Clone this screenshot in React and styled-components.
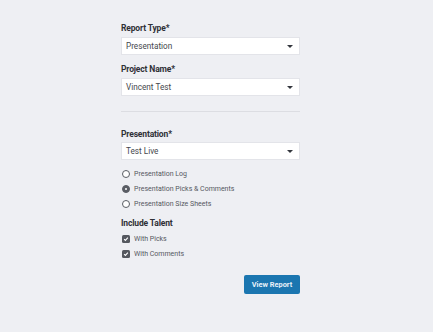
import styled, { createGlobalStyle } from 'styled-components';

const Global = createGlobalStyle`
  html, body {
    margin: 0;
    background: #eeeff3;
    font-family: Roboto, "Liberation Sans", sans-serif;
  }
`

const Page = styled.div`
  width: 433px;
  height: 332px;
  padding: 22px 0 0 121px;
  box-sizing: border-box;
`

const Form = styled.div`
  width: 179px;
  display: flex;
  flex-direction: column;
`

const Label = styled.div`
  font-size: 8.5px;
  font-weight: 700;
  letter-spacing: -0.15px;
  color: #2e3036;
  line-height: 12px;
  margin-bottom: ${p => p.$mb ?? 3}px;
  margin-top: ${p => p.$mt || 0}px;
`

const Select = styled.div`
  height: 18px;
  background: #fff;
  border: 1px solid #e3e4e9;
  box-sizing: border-box;
  display: flex;
  align-items: center;
  justify-content: space-between;
  padding: 0 6px 0 4px;
  font-size: 8.2px;
  font-weight: 400;
  color: #44474e;
  margin-bottom: ${p => p.$mb || 0}px;
`

const Caret = styled.span`
  width: 0;
  height: 0;
  border-left: 3px solid transparent;
  border-right: 3px solid transparent;
  border-top: 3px solid #33363d;
`

const Divider = styled.hr`
  border: none;
  border-top: 1px solid #dcdde2;
  margin: 15px 0 16px;
  width: 100%;
`

const Options = styled.div`
  display: flex;
  flex-direction: column;
  gap: 5px;
  margin-top: ${p => p.$mt || 0}px;
`

const Option = styled.div`
  display: flex;
  align-items: center;
  gap: 4px;
  font-size: 7px;
  line-height: 10px;
  color: #55585f;
  height: 10px;
`

const Radio = styled.span`
  width: 6px;
  height: 6px;
  margin-left: 1px;
  border-radius: 50%;
  border: 1px solid #5a5d64;
  background: ${p => (p.$on ? '#5a5d64' : '#fff')};
  box-sizing: content-box;
  display: flex;
  align-items: center;
  justify-content: center;
  &::after {
    content: '';
    width: ${p => (p.$on ? 2.5 : 0)}px;
    height: ${p => (p.$on ? 2.5 : 0)}px;
    border-radius: 50%;
    background: #fff;
  }
`

const Check = styled.span`
  width: 8px;
  height: 8px;
  margin-left: 1px;
  border-radius: 1.5px;
  background: #55585f;
  display: flex;
  align-items: center;
  justify-content: center;
`

const Footer = styled.div`
  display: flex;
  justify-content: flex-end;
  margin-top: 16px;
`

const Button = styled.button`
  width: 56px;
  height: 19px;
  border: none;
  border-radius: 2px;
  background: #1b76b0;
  color: #e9f1f8;
  font-family: inherit;
  font-size: 7.4px;
  font-weight: 700;
  padding: 0;
`

const Tick = () => (
  <svg width="6" height="6" viewBox="0 0 8 8">
    <path d="M1.5 4.2 L3.2 5.8 L6.5 2.2" stroke="#fff" strokeWidth="1.5" fill="none" />
  </svg>
)

export default function App() {
  return (
    <>
      <Global />
      <Page>
        <Form>
          <Label>Report Type*</Label>
          <Select $mb={8}>Presentation<Caret /></Select>
          <Label>Project Name*</Label>
          <Select>Vincent Test<Caret /></Select>
          <Divider />
          <Label $mb={2}>Presentation*</Label>
          <Select>Test Live<Caret /></Select>
          <Options $mt={9}>
            <Option><Radio />Presentation Log</Option>
            <Option><Radio $on />Presentation Picks &amp; Comments</Option>
            <Option><Radio />Presentation Size Sheets</Option>
          </Options>
          <Label $mt={8}>Include Talent</Label>
          <Options $mt={2}>
            <Option><Check><Tick /></Check>With Picks</Option>
            <Option><Check><Tick /></Check>With Comments</Option>
          </Options>
          <Footer><Button>View Report</Button></Footer>
        </Form>
      </Page>
    </>
  )
}
